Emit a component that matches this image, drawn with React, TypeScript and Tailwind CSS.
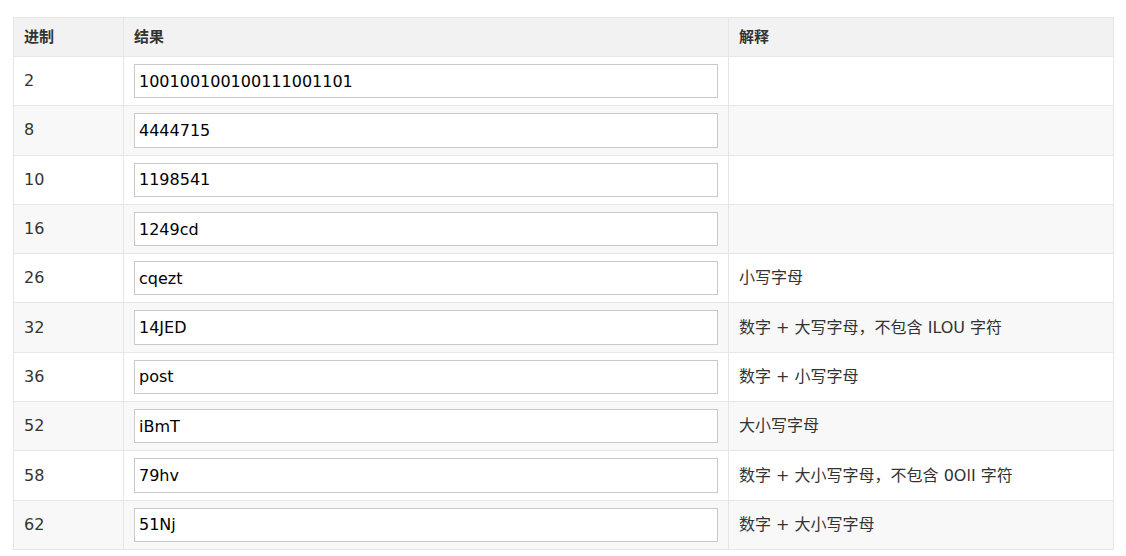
const rows: [string, string, string][] = [
  ["2", "100100100100111001101", ""],
  ["8", "4444715", ""],
  ["10", "1198541", ""],
  ["16", "1249cd", ""],
  ["26", "cqezt", "小写字母"],
  ["32", "14JED", "数字 + 大写字母，不包含 ILOU 字符"],
  ["36", "post", "数字 + 小写字母"],
  ["52", "iBmT", "大小写字母"],
  ["58", "79hv", "数字 + 大小写字母，不包含 0OlI 字符"],
  ["62", "51Nj", "数字 + 大小写字母"],
];

const font = "font-['DejaVu_Sans','Noto_Sans_CJK_SC',sans-serif]";

export default function App() {
  return (
    <div className={`bg-white w-[1126px] h-[556px] pl-[13px] pt-[17px] ${font}`}>
      <table className="w-[1100px] border-collapse table-fixed text-[16px] text-[#333]">
        <colgroup>
          <col className="w-[110px]" />
          <col className="w-[605px]" />
          <col className="w-[385px]" />
        </colgroup>
        <thead>
          <tr className="bg-[#f2f2f2] text-[15px]">
            <th className="border border-[#e6e6e6] px-[10px] py-[9px] leading-[20px] text-left font-bold">进制</th>
            <th className="border border-[#e6e6e6] px-[10px] py-[9px] leading-[20px] text-left font-bold">结果</th>
            <th className="border border-[#e6e6e6] px-[10px] py-[9px] leading-[20px] text-left font-bold">解释</th>
          </tr>
        </thead>
        <tbody>
          {rows.map(([base, value, note], i) => (
            <tr key={base} className={i % 2 === 1 ? "bg-[#f8f8f8]" : "bg-white"}>
              <td className="border border-[#e6e6e6] px-[10px] py-[7px]">{base}</td>
              <td className="border border-[#e6e6e6] px-[10px] py-[7px]">
                <input
                  readOnly
                  value={value}
                  className={`block w-full h-[34.3px] border border-[#c9c9c9] bg-white px-[4px] text-[16px] text-black outline-none ${font}`}
                />
              </td>
              <td className="border border-[#e6e6e6] px-[10px] py-[7px]">{note}</td>
            </tr>
          ))}
        </tbody>
      </table>
    </div>
  );
}
